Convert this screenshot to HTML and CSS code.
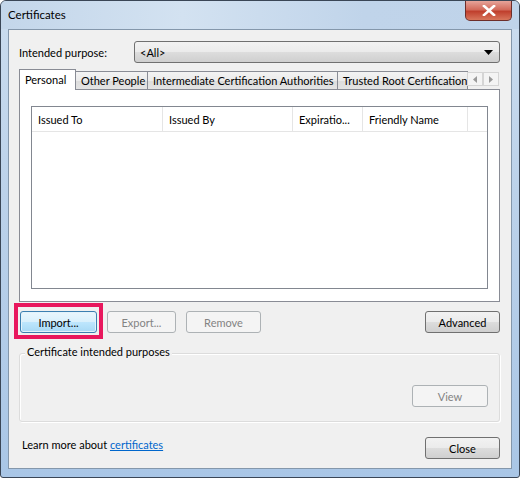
FILE: index.html
```html
<!DOCTYPE html>
<html>
<head>
<meta charset="utf-8">
<link rel="stylesheet" href="styles.css">
</head>
<body>
<div class="window">
  <div class="titlebar">
    <span class="title">Certificates</span>
    <span class="close-btn"><svg width="14" height="11" viewBox="0 0 14 11"><path d="M2 1 L12 10 M12 1 L2 10" stroke="#fff" stroke-width="2.6" stroke-linecap="square"/></svg></span>
  </div>
  <div class="client">
    <div class="purpose-row">
      <span class="purpose-label">Intended purpose:</span>
      <div class="combo"><span>&lt;All&gt;</span><svg width="9" height="5" viewBox="0 0 9 5"><path d="M0 0 H9 L4.5 5 Z" fill="#000"/></svg></div>
    </div>
    <div class="tabs">
      <div class="tab active">Personal</div>
      <div class="tab t2">Other People</div>
      <div class="tab t3">Intermediate Certification Authorities</div>
      <div class="tab last">Trusted Root Certification Authorities</div>
      <div class="scroll-arrows">
        <span class="arr"><svg width="4" height="7" viewBox="0 0 4 7"><path d="M4 0 V7 L0 3.5 Z" fill="#9a9a9a"/></svg></span>
        <span class="arr"><svg width="4" height="7" viewBox="0 0 4 7"><path d="M0 0 V7 L4 3.5 Z" fill="#9a9a9a"/></svg></span>
      </div>
    </div>
    <div class="panel">
      <div class="listview">
        <div class="lv-header">
          <div class="col c1">Issued To</div>
          <div class="col c2">Issued By</div>
          <div class="col c3">Expiratio...</div>
          <div class="col c4">Friendly Name</div>
          <div class="col c5"></div>
        </div>
      </div>
    </div>
    <div class="button-row">
      <div class="left-buttons">
        <div class="btn focused import">Import...</div>
        <div class="btn disabled export">Export...</div>
        <div class="btn disabled remove">Remove</div>
      </div>
      <div class="btn advanced">Advanced</div>
      <div class="highlight"></div>
    </div>
    <div class="group">
      <span class="group-label">Certificate intended purposes</span>
      <div class="group-foot"><div class="btn disabled view">View</div></div>
    </div>
    <div class="footer">
      <span class="learn">Learn more about <a href="#">certificates</a></span>
      <div class="btn close">Close</div>
    </div>
  </div>
</div>
</body>
</html>
```
FILE: styles.css
```css
* { box-sizing: border-box; }
html, body { margin: 0; padding: 0; background: #fff; }
body {
  font-family: Lato, "Noto Sans", "DejaVu Sans", sans-serif;
  font-size: 11px;
  color: #000;
}
.window {
  width: 520px;
  height: 478px;
  border: 1px solid #3a4656;
  border-radius: 6px 6px 3px 3px;
  background: linear-gradient(180deg, #b7cde4 0%, #c9dbee 6%, #bcd2ea 40%, #a9c6e6 100%);
  display: flex;
  flex-direction: column;
  overflow: hidden;
}
.titlebar {
  height: 28px;
  flex: 0 0 28px;
  display: flex;
  align-items: flex-start;
  justify-content: space-between;
  padding-left: 7px;
  padding-right: 7px;
  background: linear-gradient(90deg, #c3d6ea 0%, #d3e2f1 35%, #c0d4ea 70%, #bfd3e9 100%);
}
.title {
  margin-top: 7px;
  font-size: 11.5px;
  color: #000;
}
.close-btn {
  width: 47px;
  height: 20px;
  border: 1px solid #6d2e2a;
  border-top: none;
  border-radius: 0 0 5px 5px;
  background: linear-gradient(180deg, #e6a49a 0%, #d26b5c 45%, #c0402e 55%, #d8765c 100%);
  display: flex;
  align-items: center;
  justify-content: center;
}
.client {
  flex: 1;
  margin: 0 7px 8px 7px;
  background: #f0f0f0;
  border: 1px solid #8497ab;
  position: relative;
  padding: 11px 11px 0 10px;
  display: flex;
  flex-direction: column;
}
.purpose-row {
  display: flex;
  align-items: center;
  height: 22px;
}
.purpose-label {
  width: 115px;
}
.combo {
  flex: 1;
  height: 22px;
  border: 1px solid #707070;
  border-radius: 3px;
  background: linear-gradient(180deg, #f2f2f2 0%, #ebebeb 50%, #dddddd 51%, #cfcfcf 100%);
  display: flex;
  align-items: center;
  justify-content: space-between;
  padding: 0 6px 0 5px;
}
.tabs {
  margin-top: 6px;
  display: flex;
  align-items: flex-end;
  height: 20px;
  position: relative;
  z-index: 1;
}
.tab {
  height: 18px;
  border: 1px solid #898c95;
  border-bottom: none;
  margin-left: -1px;
  padding: 0 4px 0 5px;
  background: linear-gradient(180deg, #f3f3f3 0%, #ebebeb 50%, #dcdcdc 51%, #e4e4e4 100%);
  line-height: 17px;
  white-space: nowrap;
  overflow: hidden;
}
.tab.active {
  margin-left: 0;
  height: 21px;
  width: 57px;
  background: #fff;
  line-height: 19px;
  padding: 0 5px;
  margin-bottom: -1px;
  z-index: 2;
  position: relative;
}
.t2 { width: 73px; }
.t3 { width: 191px; }
.tab.last {
  width: 131px;
}
.scroll-arrows {
  display: flex;
  align-self: center;
  margin-left: -1px;
  gap: 0;
}
.arr {
  width: 16px;
  height: 14px;
  border: 1px solid #d5d5d5;
  background: #f4f4f4;
  display: flex;
  align-items: center;
  justify-content: center;
}
.panel {
  height: 213px;
  background: #fff;
  border: 1px solid #898c95;
  padding: 16px 11px 12px 11px;
}
.listview {
  height: 100%;
  border: 1px solid #828790;
  background: #fff;
}
.lv-header {
  display: flex;
  height: 25px;
  border-bottom: 1px solid #e5e5e5;
}
.col {
  height: 25px;
  line-height: 25px;
  padding-left: 6px;
  border-right: 1px solid #e5e5e5;
  white-space: nowrap;
  overflow: hidden;
}
.c1 { width: 131px; }
.c2 { width: 130px; }
.c3 { width: 70px; }
.c4 { width: 105px; }
.c5 { flex: 1; border-right: none; }
.button-row {
  margin-top: 9px;
  height: 22px;
  display: flex;
  justify-content: space-between;
  position: relative;
}
.left-buttons {
  display: flex;
  gap: 10px;
  margin-left: 1px;
}
.btn {
  height: 22px;
  border: 1px solid #707070;
  border-radius: 3px;
  background: linear-gradient(180deg, #f2f2f2 0%, #ebebeb 50%, #dddddd 51%, #cfcfcf 100%);
  display: flex;
  align-items: center;
  justify-content: center;
}
.btn.focused {
  border-color: #3c7fb1;
  background: linear-gradient(180deg, #eaf6fd 0%, #d9f0fc 50%, #bee6fd 51%, #a7d9f5 100%);
  box-shadow: inset 0 0 0 1px #e3f3fb;
}
.btn.disabled {
  border-color: #adb2b5;
  background: #f4f4f4;
  color: #838383;
}
.import { width: 77px; }
.export { width: 69px; }
.remove { width: 75px; }
.advanced { width: 75px; }
.highlight {
  position: absolute;
  left: -5px;
  top: -8px;
  width: 89px;
  height: 36px;
  border: 4px solid #e8175d;
}
.group {
  margin-top: 20px;
  height: 69px;
  border: 1px solid #dcdcdc;
  border-radius: 3px;
  box-shadow: 1px 1px 0 #fff inset, 1px 1px 0 #fff;
  position: relative;
  display: flex;
  flex-direction: column;
  justify-content: flex-end;
  padding: 0 11px 14px 0;
}
.group-label {
  position: absolute;
  top: -9px;
  left: 5px;
  padding: 0 2px;
  background: #f0f0f0;
}
.group-foot {
  display: flex;
  justify-content: flex-end;
}
.view { width: 76px; }
.footer {
  margin-top: 15px;
  display: flex;
  justify-content: space-between;
  align-items: flex-start;
  padding-left: 3px;
}
.learn {
  margin-top: 1px;
}
.learn a {
  color: #0066cc;
  text-decoration: underline;
}
.close { width: 75px; }
```
